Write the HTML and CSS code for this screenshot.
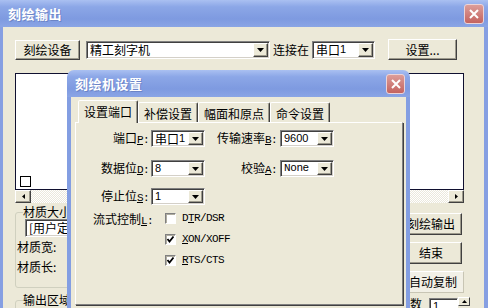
FILE: index.html
```html
<!DOCTYPE html>
<html lang="zh-CN">
<head>
    <meta charset="UTF-8">
    <meta name="viewport" content="width=device-width, initial-scale=1.0">
    <title>刻绘输出</title>
    <link rel="stylesheet" href="styles.css">
</head>
<body>

<div class="window">
    <div class="titlebar">
        <span class="title">刻绘输出</span>
        <span class="close-btn">
            <svg width="10" height="10" viewBox="0 0 10 10"><path d="M1 1L9 9M9 1L1 9" stroke="#fff" stroke-width="2"/></svg>
        </span>
    </div>

    <div class="client">
        <div class="toolbar">
            <div class="btn btn-device">刻绘设备</div>
            <div class="combo combo-machine">
                <span class="combo-text">精工刻字机</span>
                <span class="drop"><svg width="7" height="4"><polygon points="0,0 7,0 3.5,4"/></svg></span>
            </div>
            <span class="conn-label">连接在</span>
            <div class="combo combo-port">
                <span class="combo-text">串口<span class="num">1</span></span>
                <span class="drop"><svg width="7" height="4"><polygon points="0,0 7,0 3.5,4"/></svg></span>
            </div>
            <div class="btn btn-setup">设置...</div>
        </div>

        <div class="canvas"><span class="mark"></span></div>
        <div class="hscroll">
            <span class="sb-btn"><svg width="3" height="5"><polygon points="3,0 3,5 0,2.5"/></svg></span>
            <span class="sb-track"></span>
            <span class="sb-btn"><svg width="3" height="5"><polygon points="0,0 0,5 3,2.5"/></svg></span>
        </div>

        <div class="bottom">
            <div class="left-col">
                <fieldset class="group group-size">
                    <legend>材质大小</legend>
                    <div class="combo combo-size"><span class="combo-text">[用户定义]</span></div>
                    <div class="field-label">材质宽:</div>
                    <div class="field-label second">材质长:</div>
                </fieldset>
                <fieldset class="group group-area">
                    <legend>输出区域</legend>
                </fieldset>
            </div>

            <div class="right-col">
                <div class="btn btn-wide">刻绘输出</div>
                <div class="btn btn-wide">结束</div>
                <div class="toggle">自动复制</div>
                <div class="copies">
                    <span class="copies-label">份数</span>
                    <div class="spin-input">1</div>
                    <div class="spin-btn"><svg width="5" height="3"><polygon points="0,3 5,3 2.5,0"/></svg></div>
                </div>
            </div>
        </div>
    </div>

    <!-- settings dialog on top of the output window -->
    <div class="dialog">
        <div class="dlg-title">
            <span class="title">刻绘机设置</span>
            <span class="close-btn small">
                <svg width="10" height="10" viewBox="0 0 10 10"><path d="M1 1L9 9M9 1L1 9" stroke="#fff" stroke-width="2"/></svg>
            </span>
        </div>
        <div class="dlg-body">
            <div class="tabs">
                <div class="tab active">设置端口</div>
                <div class="tab">补偿设置</div>
                <div class="tab">幅面和原点</div>
                <div class="tab">命令设置</div>
            </div>
            <div class="panel">
                <div class="row">
                    <label class="lbl lbl-a">端口<span class="hk">P</span><span class="mono">:</span></label>
                    <div class="combo c-small">
                        <span class="combo-text">串口<span class="num">1</span></span>
                        <span class="drop"><svg width="7" height="4"><polygon points="0,0 7,0 3.5,4"/></svg></span>
                    </div>
                    <label class="lbl lbl-b">传输速率<span class="hk">B</span><span class="mono">:</span></label>
                    <div class="combo c-small">
                        <span class="combo-text num">9600</span>
                        <span class="drop"><svg width="7" height="4"><polygon points="0,0 7,0 3.5,4"/></svg></span>
                    </div>
                </div>
                <div class="row row-2">
                    <label class="lbl lbl-a">数据位<span class="hk">D</span><span class="mono">:</span></label>
                    <div class="combo c-small">
                        <span class="combo-text num">8</span>
                        <span class="drop"><svg width="7" height="4"><polygon points="0,0 7,0 3.5,4"/></svg></span>
                    </div>
                    <label class="lbl lbl-b">校验<span class="hk">A</span><span class="mono">:</span></label>
                    <div class="combo c-small">
                        <span class="combo-text mono-val">None</span>
                        <span class="drop"><svg width="7" height="4"><polygon points="0,0 7,0 3.5,4"/></svg></span>
                    </div>
                </div>
                <div class="row row-3">
                    <label class="lbl lbl-a">停止位<span class="hk">S</span><span class="mono">:</span></label>
                    <div class="combo c-small">
                        <span class="combo-text num">1</span>
                        <span class="drop"><svg width="7" height="4"><polygon points="0,0 7,0 3.5,4"/></svg></span>
                    </div>
                </div>
                <div class="flow">
                    <label class="lbl lbl-flow">流式控制<span class="hk">L</span><span class="mono">:</span></label>
                    <div class="checks">
                        <div class="check"><span class="box"></span><span class="mono">D<u>T</u>R/DSR</span></div>
                        <div class="check"><span class="box"><svg width="9" height="9" viewBox="0 0 9 9"><path d="M1.5 4L3.5 6.5L7.5 1.5" fill="none" stroke="#000" stroke-width="1.8"/></svg></span><span class="mono"><u>X</u>ON/XOFF</span></div>
                        <div class="check"><span class="box"><svg width="9" height="9" viewBox="0 0 9 9"><path d="M1.5 4L3.5 6.5L7.5 1.5" fill="none" stroke="#000" stroke-width="1.8"/></svg></span><span class="mono"><u>R</u>TS/CTS</span></div>
                    </div>
                </div>
            </div>
        </div>
    </div>
</div>

</body>
</html>
```

FILE: styles.css
```css
* {
    box-sizing: border-box;
}

body {
    margin: 0;
    width: 488px;
    height: 308px;
    overflow: hidden;
    background-color: #ece9d8;
    color: #000;
    font-family: "Noto Sans CJK SC", "Liberation Sans", sans-serif;
    font-size: 12px;
}

.window {
    position: relative;
    width: 488px;
    height: 308px;
    display: flex;
    flex-direction: column;
    background-color: #ece9d8;
    overflow: hidden;
}

/* title bars */
.titlebar,
.dlg-title {
    height: 27px;
    flex-shrink: 0;
    display: flex;
    align-items: center;
    justify-content: space-between;
    padding: 0 4px 0 8px;
    background: linear-gradient(#aac0f1, #8ca7e7 25%, #7e9ae0 70%, #8aa5e5);
}

.title {
    color: #fff;
    font-weight: bold;
    font-size: 13px;
    letter-spacing: 0.5px;
    line-height: 1;
    text-shadow: 1px 1px 0 #6c84c6;
}

.close-btn {
    width: 20px;
    height: 20px;
    border: 1px solid #ecd3d6;
    border-radius: 3px;
    background: linear-gradient(#dc9d99, #c4635f);
    display: flex;
    align-items: center;
    justify-content: center;
}

.close-btn.small {
    width: 19px;
    height: 20px;
}

.client {
    flex: 1;
    border-left: 3px solid #869fe2;
    border-right: 4px solid #869fe2;
    padding: 12px 14px 0 12px;
}

/* common controls */
.btn {
    display: flex;
    align-items: center;
    justify-content: center;
    background-color: #ece9d8;
    border: 1px solid;
    border-color: #fff #404040 #404040 #fff;
    box-shadow: inset -1px -1px #9d9a8c;
    line-height: 1;
    white-space: nowrap;
}

.combo {
    display: flex;
    align-items: stretch;
    height: 18px;
    padding: 1px;
    background-color: #fff;
    border: 1px solid;
    border-color: #808080 #fff #fff #808080;
    box-shadow: inset 1px 1px #404040, inset -1px -1px #d4d0c8;
}

.combo-text {
    flex: 1;
    display: flex;
    align-items: center;
    padding-left: 2px;
    line-height: 1;
    white-space: nowrap;
}

.num {
    font-family: "Liberation Sans", sans-serif;
    font-size: 11px;
}

.mono-val {
    font-family: "Liberation Mono", monospace;
    font-size: 11px;
    letter-spacing: -0.4px;
}

.drop {
    width: 15px;
    flex-shrink: 0;
    display: flex;
    align-items: center;
    justify-content: center;
    background-color: #ece9d8;
    border: 1px solid;
    border-color: #fff #404040 #404040 #fff;
    box-shadow: inset -1px -1px #9d9a8c;
}

/* toolbar row */
.toolbar {
    display: flex;
    align-items: center;
    height: 21px;
}

.btn-device {
    width: 65px;
    height: 20px;
}

.combo-machine {
    width: 184px;
    margin-left: 6px;
}

.conn-label {
    margin-left: 3px;
    line-height: 1;
}

.combo-port {
    width: 63px;
    margin-left: 3px;
}

.btn-setup {
    width: 69px;
    height: 21px;
    margin-left: 13px;
}

/* preview area */
.canvas {
    width: 449px;
    height: 117px;
    margin-top: 13px;
    background-color: #fff;
    border: 1px solid #101030;
    display: flex;
    align-items: flex-end;
    padding: 0 0 2px 4px;
}

.mark {
    width: 11px;
    height: 11px;
    border: 1px solid #000;
}

.hscroll {
    width: 449px;
    height: 13px;
    display: flex;
}

.sb-btn {
    width: 16px;
    height: 13px;
    display: flex;
    align-items: center;
    justify-content: center;
    background-color: #ece9d8;
    border: 1px solid;
    border-color: #fff #404040 #404040 #fff;
    box-shadow: inset -1px -1px #9d9a8c;
}

.sb-track {
    flex: 1;
    background: repeating-conic-gradient(#fff 0 25%, #ebe8dc 0 50%) 0 0 / 2px 2px;
}

/* bottom part of output window */
.bottom {
    display: flex;
    justify-content: space-between;
}

.left-col {
    width: 60px;
    display: flex;
    flex-direction: column;
}

.group {
    margin: 2px 0 0;
    padding: 0 1px;
    border: 1px solid #d0d0bf;
    border-radius: 3px;
    min-width: 0;
}

.group legend {
    padding: 0;
    margin-left: 6px;
    line-height: 14px;
    white-space: nowrap;
}

.group-size {
    width: 90px;
    padding-bottom: 13px;
}

.combo-size {
    width: 78px;
    margin-left: 8px;
}

.field-label {
    margin-top: 2px;
    line-height: 15px;
    white-space: nowrap;
}

.field-label.second {
    margin-top: 5px;
}

.group-area {
    width: 90px;
    height: 30px;
    margin-top: 5px;
}

.right-col {
    width: 72px;
    display: flex;
    flex-direction: column;
    align-items: flex-start;
    padding-top: 10px;
}

.btn-wide {
    width: 62px;
    height: 22px;
    margin-left: 2px;
}

.btn-wide + .btn-wide {
    margin-top: 7px;
}

.toggle {
    width: 66px;
    height: 22px;
    margin-top: 7px;
    padding-left: 10px;
    display: flex;
    align-items: center;
    line-height: 1;
    background-color: #f2f0e6;
    border: 1px solid;
    border-color: #fff #c8c5b4 #c8c5b4 #fff;
}

.copies {
    display: flex;
    align-items: flex-start;
    margin-top: 4px;
}

.copies-label {
    line-height: 14px;
}

.spin-input {
    width: 29px;
    height: 18px;
    margin-left: 7px;
    margin-top: 1px;
    padding-left: 3px;
    font-family: "Liberation Sans", sans-serif;
    font-size: 11px;
    line-height: 14px;
    background-color: #fff;
    border: 1px solid;
    border-color: #808080 #fff #fff #808080;
    box-shadow: inset 1px 1px #404040;
}

.spin-btn {
    width: 12px;
    height: 9px;
    display: flex;
    align-items: center;
    justify-content: center;
    background-color: #ece9d8;
    border: 1px solid;
    border-color: #fff #404040 #404040 #fff;
}

/* settings dialog */
.dialog {
    position: absolute;
    left: 67px;
    top: 70px;
    width: 343px;
    height: 260px;
    display: flex;
    flex-direction: column;
    border-radius: 7px 7px 0 0;
    overflow: hidden;
}

.dlg-title {
    padding: 0 5px 0 8px;
}

.dlg-body {
    flex: 1;
    background-color: #ece9d8;
    border-left: 4px solid #839ee2;
    border-right: 4px solid #839ee2;
    padding: 3px 3px 0 4px;
}

.tabs {
    display: flex;
    align-items: flex-end;
    height: 22px;
    padding-left: 3px;
}

.tab {
    height: 20px;
    padding: 2px 5px 0;
    display: flex;
    align-items: center;
    line-height: 1;
    white-space: nowrap;
    border: 1px solid;
    border-bottom: none;
    border-color: #fff #404040 transparent #fff;
    box-shadow: inset -1px 0 #9d9a8c;
    border-radius: 2px 2px 0 0;
}

.tab.active {
    position: relative;
    z-index: 1;
    height: 23px;
    margin-bottom: -1px;
    padding-bottom: 3px;
    background-color: #ece9d8;
}

.panel {
    width: 328px;
    height: 183px;
    padding-top: 7px;
    border: 1px solid;
    border-color: #fff #808080 #808080 #fff;
    box-shadow: 1px 1px #404040;
}

.row {
    display: flex;
    align-items: center;
    height: 17px;
}

.row-2 {
    margin-top: 13px;
}

.row-3 {
    margin-top: 11px;
}

.lbl {
    text-align: right;
    line-height: 1;
    white-space: nowrap;
}

.lbl-a {
    width: 75px;
    padding-right: 2px;
}

.lbl-b {
    width: 75px;
    padding-right: 3px;
}

.c-small {
    width: 54px;
    height: 17px;
}

.hk,
.mono {
    font-family: "Liberation Mono", monospace;
    font-size: 11px;
    letter-spacing: -0.6px;
}

.hk {
    text-decoration: underline;
}

.flow {
    display: flex;
    align-items: flex-start;
    margin-top: 8px;
}

.lbl-flow {
    width: 77px;
    line-height: 11px;
}

.checks {
    display: flex;
    flex-direction: column;
    gap: 10px;
    margin-left: 12px;
}

.check {
    display: flex;
    align-items: center;
    gap: 6px;
    height: 11px;
    line-height: 1;
}

.box {
    width: 11px;
    height: 11px;
    display: flex;
    align-items: center;
    justify-content: center;
    background-color: #fff;
    border: 1px solid;
    border-color: #808080 #fff #fff #808080;
    box-shadow: inset 1px 1px #b0ada0;
}
```
